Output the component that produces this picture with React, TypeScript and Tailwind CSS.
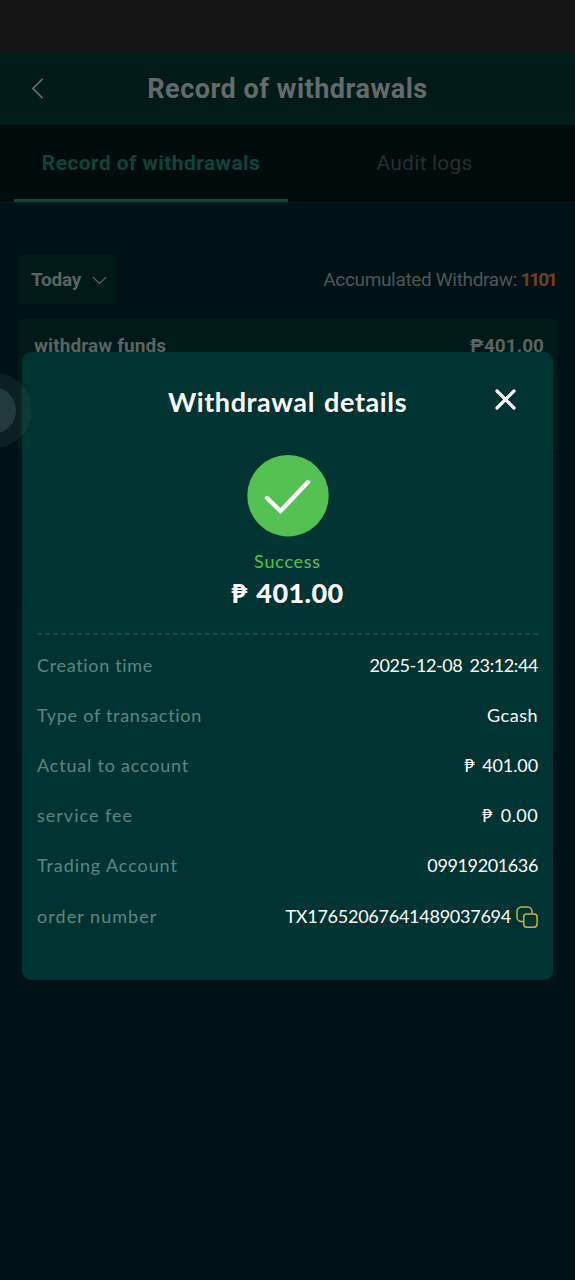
import React from 'react';
import { ChevronDown, ChevronLeft } from 'lucide-react';

const details = [
  { label: 'Creation time', labelStyle: 'tracking-[0.67px]', value: '2025-12-08 23:12:44', valueStyle: 'tracking-[-0.4px] [word-spacing:3px]' },
  { label: 'Type of transaction', labelStyle: 'tracking-[0.72px]', value: 'Gcash', valueStyle: 'tracking-[0.5px]' },
  { label: 'Actual to account', labelStyle: 'tracking-[0.8px]', value: '₱ 401.00', valueStyle: 'tracking-[-0.1px] [word-spacing:3px]' },
  { label: 'service fee', labelStyle: 'tracking-[1px]', value: '₱ 0.00', valueStyle: 'tracking-[0.4px] [word-spacing:3px]' },
  { label: 'Trading Account', labelStyle: 'tracking-[0.9px]', value: '09919201636', valueStyle: 'tracking-[-0.38px]' },
  { label: 'order number', labelStyle: 'tracking-[1.05px]', value: 'TX17652067641489037694', valueStyle: 'tracking-[-0.25px]', copy: true },
];

function CopyIcon() {
  return (
    <svg className="relative top-px ml-[5px] h-[22px] w-[22px]" viewBox="0 0 22 22" fill="none" stroke="#c4b34a" strokeWidth="1.5">
      <path d="M7.5 15.5H5.5A4.5 4.5 0 0 1 1 11V5.5A4.5 4.5 0 0 1 5.5 1H11.5A4.5 4.5 0 0 1 16 5.5V7.5" />
      <rect x="7.7" y="8" width="13.4" height="13.2" rx="3.2" />
    </svg>
  );
}

export default function App() {
  return (
    <div className="relative flex h-[1280px] w-[575px] flex-col overflow-hidden bg-[#001216] font-[Roboto,'Noto_Sans',sans-serif]">
      <div className="h-[52px] bg-[#141414]" />
      <header className="relative flex h-[73px] items-center justify-center bg-[#001c19] pt-[2px]">
        <ChevronLeft className="absolute left-[19px] top-[18px] h-[37px] w-[37px] text-[#68736f]" strokeWidth={1.1} />
        <h1 className="text-[27px] font-bold tracking-[0.5px] text-[#656a6c]">Record of withdrawals</h1>
      </header>
      <nav className="flex h-[78px] border-b border-[#00221f] bg-[#000b0b] px-[14px]">
        <div className="flex w-[274px] items-center justify-center border-b-[3px] border-[#0d443e] pt-[3px] text-[21px] font-bold tracking-[0.4px] text-[#0d443e]">
          Record of withdrawals
        </div>
        <div className="flex flex-1 items-center justify-center text-[21px] tracking-[0.2px] text-[#253030]">Audit logs</div>
      </nav>

      <main className="pl-[18px] pr-[17px] pt-[52px]">
        <div className="flex items-center justify-between">
          <div className="flex h-[49px] w-[99px] items-center gap-[6px] rounded bg-[#001a18] pl-[13px] pt-[2px] text-[19px] font-bold tracking-[-0.2px] text-[#5b6363]">
            Today
            <ChevronDown className="h-[25px] w-[25px] shrink-0" strokeWidth={1.2} />
          </div>
          <p className="mr-[2px] pt-[2px] text-[19px] tracking-[-0.33px] text-[#4d5758]">
            Accumulated Withdraw: <b className="-ml-px tracking-[-2px] text-[#71401f]">1101</b>
          </p>
        </div>
        <div className="mt-[15px] flex h-[131px] justify-between rounded bg-[#001a18] pl-4 pr-[14px] pt-[13px] text-[19px] font-bold text-[#5b6363]">
          <span className="tracking-[0.1px]">withdraw funds</span>
          <span>₱401.00</span>
        </div>
        <div className="mt-[2px] h-[151px] rounded bg-[#001517]" />
        <div className="mt-[3px] h-[149px] rounded bg-[#001417]" />
      </main>

      <section className="absolute left-[22px] top-[352px] flex h-[628px] w-[531px] flex-col rounded-[9px] bg-[#003433] px-[15px] font-[Lato,'Noto_Sans',sans-serif] text-white">
        <div className="relative flex h-[100px] items-center justify-center">
          <h2 className="text-[27px] font-bold tracking-[0.6px] [word-spacing:2px]">Withdrawal details</h2>
          <svg className="absolute right-[22px] top-[37px] h-[21px] w-[21px]" viewBox="0 0 21 21" stroke="currentColor" strokeWidth="3.2" strokeLinecap="round">
            <path d="M2 2l17 17M19 2L2 19" />
          </svg>
        </div>
        <div className="mt-[3px] flex flex-col items-center">
          <svg className="h-[82px] w-[82px]" viewBox="0 0 82 82" fill="none">
            <circle cx="41" cy="40.7" r="40.7" fill="#54c253" />
            <path d="M20 43L33.5 56L61 27" stroke="white" strokeWidth="4.4" strokeLinecap="round" />
          </svg>
          <p className="mt-[11px] text-[18px] leading-[26px] tracking-[0.75px] text-[#54c253]">Success</p>
          <p className="text-[27px] font-black leading-[38px] tracking-[0.4px] [word-spacing:2px]">₱ 401.00</p>
        </div>
        <svg className="mt-[21px] h-[2px] w-full" viewBox="0 0 501 2" stroke="#0a5b50" strokeWidth="1.6" strokeDasharray="5 3">
          <path d="M0 1H501" />
        </svg>
        <dl className="mt-[5px]">
          {details.map((item) => (
            <div key={item.label} className="flex h-[50.2px] items-center justify-between text-[18px]">
              <dt className={`text-[#5c8781] ${item.labelStyle}`}>{item.label}</dt>
              <dd className={`flex items-center ${item.valueStyle}`}>
                {item.value}
                {item.copy && <CopyIcon />}
              </dd>
            </div>
          ))}
        </dl>
      </section>

      <div className="absolute left-[-43px] top-[373px] h-[75px] w-[75px] rounded-full bg-[#344943]/25">
        <div className="absolute left-[12px] top-[14px] h-[47px] w-[47px] rounded-full bg-[#223a39]" />
      </div>
    </div>
  );
}
